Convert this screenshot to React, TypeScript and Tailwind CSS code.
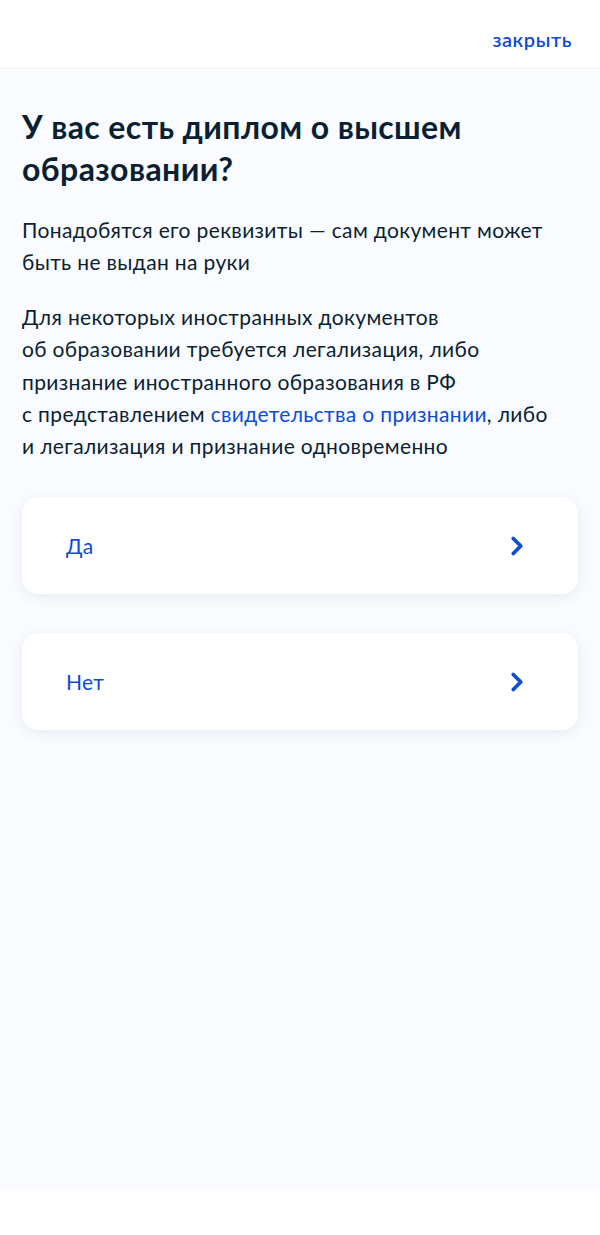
import { ChevronRight } from "lucide-react";

const options = ["Да", "Нет"];

export default function App() {
  return (
    <div
      className="min-h-[1235px] flex flex-col bg-white text-[#0b1f33]"
      style={{ fontFamily: "Lato, 'Noto Sans', sans-serif" }}
    >
      {/* Header */}
      <header className="h-[68px] bg-white flex items-center justify-end px-[28px] border-b border-[#f1f3f7]">
        <button className="text-[20px] font-semibold text-[#0d4cd3] tracking-[0.6px] mt-[10px]">закрыть</button>
      </header>

      {/* Content */}
      <main className="bg-[#f9fbfe] px-[22px] pt-[38px] h-[1123px]">
        <h1 className="text-[32px] leading-[42px] font-bold tracking-[0.4px] mb-[24px]">
          У вас есть диплом о высшем
          <br />
          образовании?
        </h1>
        <p className="text-[21px] leading-[32px] tracking-[0.35px] mb-[23px]">
          Понадобятся его реквизиты — сам документ может
          <br />
          быть не выдан на руки
        </p>
        <p className="text-[21px] leading-[32.3px] tracking-[0.35px]">
          Для некоторых иностранных документов
          <br />
          об образовании требуется легализация, либо
          <br />
          признание иностранного образования в РФ
          <br />
          с представлением <a className="text-[#0d4cd3]">свидетельства о признании</a>, либо
          <br />
          и легализация и признание одновременно
        </p>

        <div className="mt-[35px] flex flex-col gap-[39px]">
          {options.map((o) => (
            <button
              key={o}
              className="h-[97px] w-full bg-white rounded-[16px] shadow-[0_3px_12px_rgba(102,130,180,0.13)] flex items-center justify-between pl-[44px] pr-[46px] text-left"
            >
              <span className="text-[21px] tracking-[0.3px] text-[#0d4cd3]">{o}</span>
              <ChevronRight className="w-[30px] h-[30px] text-[#0d4cd3]" strokeWidth={3} />
            </button>
          ))}
        </div>
      </main>
    </div>
  );
}
